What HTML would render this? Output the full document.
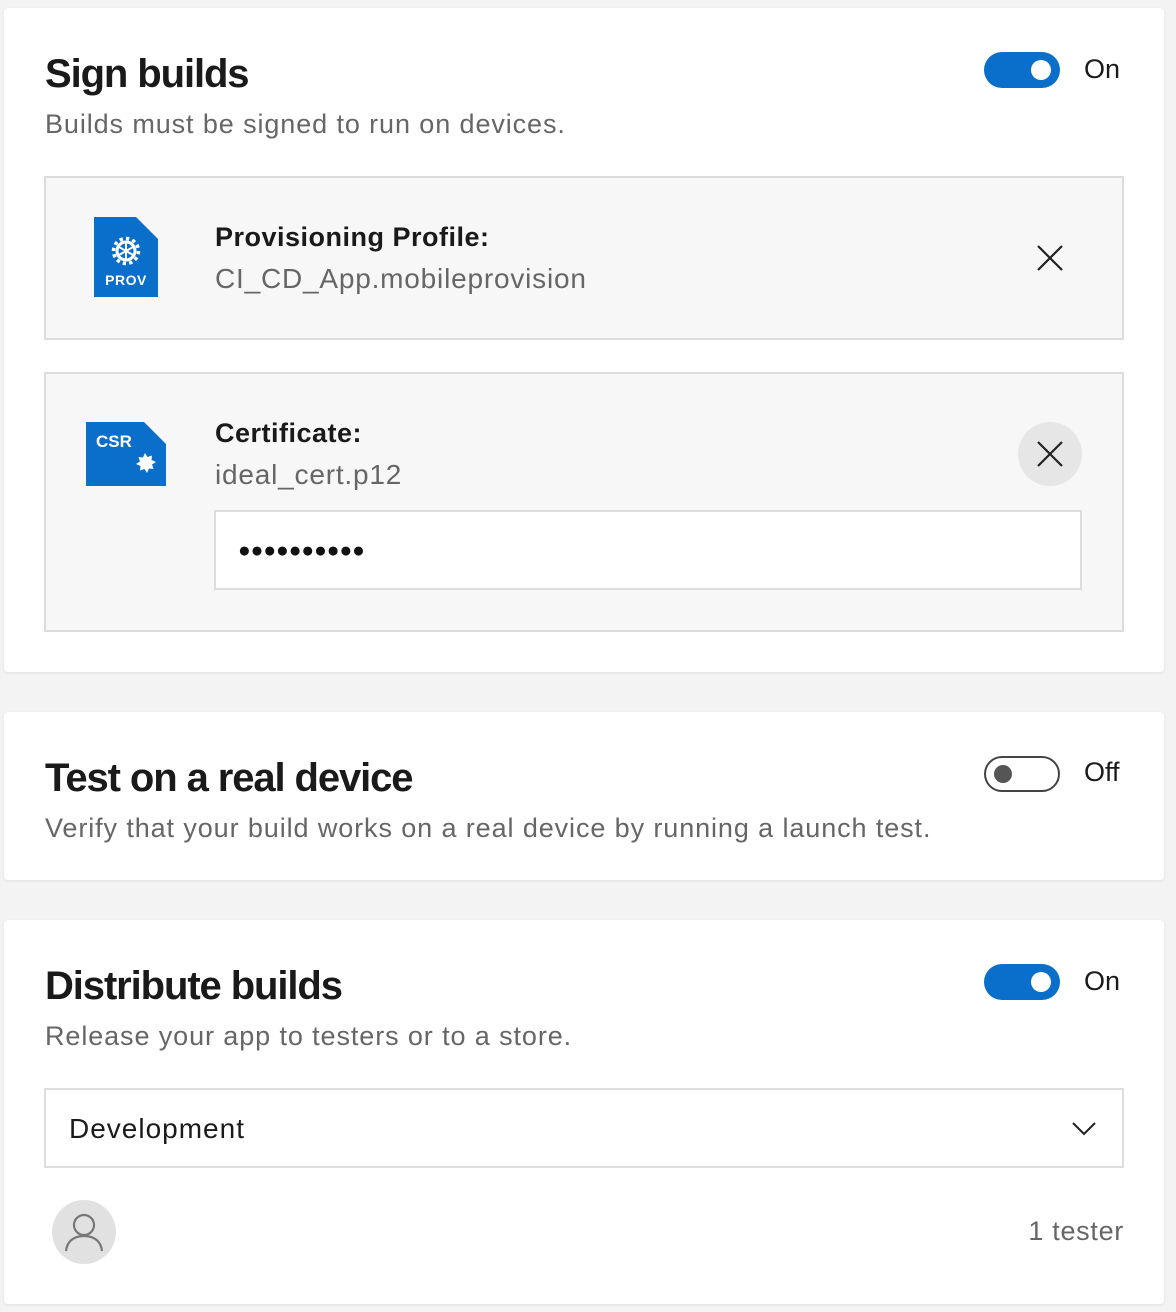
<!DOCTYPE html>
<html><head><style>
body{margin:0;background:#f3f3f3;font-family:"Liberation Sans",sans-serif;width:1176px;height:1312px;position:relative;overflow:hidden}
.card{position:absolute;left:4px;width:1160px;background:#fff;border-radius:4px;box-shadow:0 1px 3px rgba(0,0,0,.08)}
.abs{position:absolute}
h2{position:absolute;margin:0;font-size:40px;font-weight:bold;color:#1a1a1a;letter-spacing:-1.1px}
.sub{position:absolute;font-size:27px;color:#666;letter-spacing:0.9px}
.tog{position:absolute;width:76px;height:36px;border-radius:18px;box-sizing:border-box}
.on{background:#0a6ecb}
.on::after{content:"";position:absolute;right:9px;top:8px;width:20px;height:20px;border-radius:50%;background:#fff}
.off{border:2px solid #444;background:#fff}
.off::after{content:"";position:absolute;left:8px;top:7px;width:18px;height:18px;border-radius:50%;background:#555}
.lbl{position:absolute;font-size:27px;color:#1a1a1a}
.box{position:absolute;left:40px;width:1080px;background:#f7f7f7;border:2px solid #dcdcdc;box-sizing:border-box}
.bt{position:absolute;font-size:27px;font-weight:bold;color:#1a1a1a;letter-spacing:0.5px}
.bv{position:absolute;font-size:28px;color:#666;letter-spacing:0.8px}
</style></head><body>
<div class="card" style="top:8px;height:664px">
 <h2 style="left:41px;top:44px">Sign builds</h2>
 <div class="sub" style="left:41px;top:101px">Builds must be signed to run on devices.</div>
 <div class="tog on" style="left:980px;top:44px"></div>
 <div class="lbl" style="left:1080px;top:46px">On</div>
 <div class="box" style="top:168px;height:164px">
  <svg class="abs" style="left:48px;top:39px" width="64" height="80" viewBox="0 0 64 80"><path d="M0 0H42L64 22V80H0Z" fill="#0a6ecb"/><g transform="translate(32,34)" fill="none" stroke="#fff"><circle r="12.5" stroke-width="3.5" stroke-dasharray="3.3 3.2"/><circle r="9" stroke-width="3"/><path d="M0 -8V8M-7 -4L7 4M-7 4L7 -4" stroke-width="2"/></g><text x="32" y="68" font-size="14" font-weight="bold" fill="#fff" text-anchor="middle" font-family="Liberation Sans" letter-spacing="0.5">PROV</text></svg>
  <div class="bt" style="left:169px;top:44px">Provisioning Profile:</div>
  <div class="bv" style="left:169px;top:85px">CI_CD_App.mobileprovision</div>
  <svg class="abs" style="left:990px;top:66px" width="28" height="28"><path d="M2 2L26 26M26 2L2 26" stroke="#222" stroke-width="2.2"/></svg>
 </div>
 <div class="box" style="top:364px;height:260px">
  <svg class="abs" style="left:40px;top:48px" width="80" height="64" viewBox="0 0 80 64"><path d="M0 0H58L80 22V64H0Z" fill="#0a6ecb"/><text x="10" y="25" font-size="17" font-weight="bold" fill="#fff" font-family="Liberation Sans">CSR</text><polygon fill="#fff" points="59,31 61.5,35 66,33.5 65.5,38 70,40 66,42.5 67.5,47 63,46.5 61,51 58.5,47 54,48.5 54.5,44 50,42 54,39.5 52.5,35 57,35.5"/></svg>
  <div class="bt" style="left:169px;top:44px">Certificate:</div>
  <div class="bv" style="left:169px;top:85px">ideal_cert.p12</div>
  <div class="abs" style="left:972px;top:48px;width:64px;height:64px;border-radius:50%;background:#e6e6e6"></div>
  <svg class="abs" style="left:990px;top:66px" width="28" height="28"><path d="M2 2L26 26M26 2L2 26" stroke="#222" stroke-width="2.2"/></svg>
  <div class="abs" style="left:168px;top:136px;width:868px;height:80px;background:#fff;border:2px solid #ddd;box-sizing:border-box;font-size:21px;line-height:78px;padding-left:22px;letter-spacing:0px;color:#111">●●●●●●●●●●</div>
 </div>
</div>
<div class="card" style="top:712px;height:168px">
 <h2 style="left:41px;top:44px">Test on a real device</h2>
 <div class="sub" style="left:41px;top:101px">Verify that your build works on a real device by running a launch test.</div>
 <div class="tog off" style="left:980px;top:44px"></div>
 <div class="lbl" style="left:1080px;top:45px">Off</div>
</div>
<div class="card" style="top:920px;height:384px">
 <h2 style="left:41px;top:44px">Distribute builds</h2>
 <div class="sub" style="left:41px;top:101px">Release your app to testers or to a store.</div>
 <div class="tog on" style="left:980px;top:44px"></div>
 <div class="lbl" style="left:1080px;top:46px">On</div>
 <div class="abs" style="left:40px;top:168px;width:1080px;height:80px;border:2px solid #ddd;box-sizing:border-box;font-size:28px;line-height:78px;padding-left:23px;color:#1a1a1a;letter-spacing:1px">Development
  <svg class="abs" style="right:26px;top:32px" width="24" height="14"><path d="M1 1L12 12L23 1" fill="none" stroke="#222" stroke-width="2"/></svg></div>
 <div class="abs" style="left:48px;top:280px;width:64px;height:64px;border-radius:50%;background:#e1e1e1"><svg width="64" height="64"><circle cx="32" cy="25" r="10" fill="none" stroke="#777" stroke-width="2.2"/><path d="M14 51C15 41 22 36 32 36S49 41 50 51" fill="none" stroke="#777" stroke-width="2.2"/></svg></div>
 <div class="abs" style="right:40px;top:296px;font-size:27px;color:#666;letter-spacing:0.7px">1 tester</div>
</div>
</body></html>
